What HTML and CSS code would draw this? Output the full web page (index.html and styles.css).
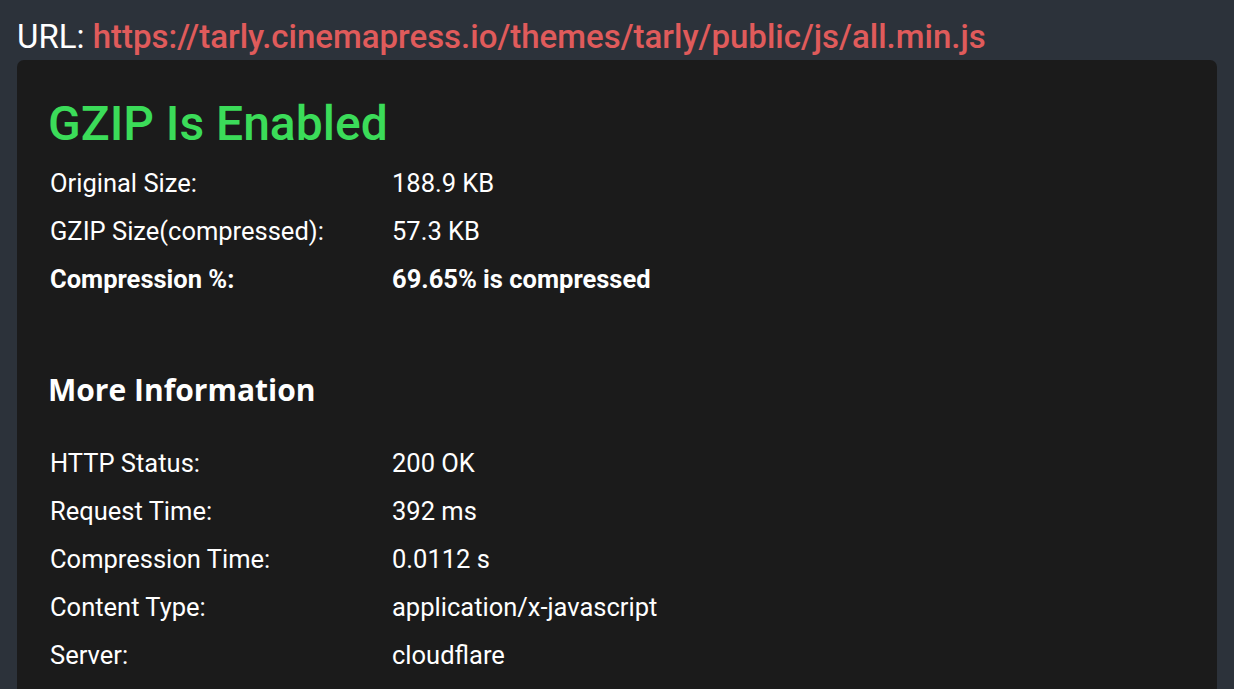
FILE: index.html
```html
<!DOCTYPE html>
<html>
<head>
<meta charset="utf-8">
<link rel="stylesheet" href="styles.css">
</head>
<body>
<div class="page">
  <div class="url-line"><span class="url-label">URL:</span> <span class="url-value">https://tarly.cinemapress.io/themes/tarly/public/js/all.min.js</span></div>
  <div class="card">
    <h1 class="status">GZIP Is Enabled</h1>
    <table class="info first">
      <tr><td class="k">Original Size:</td><td>188.9 KB</td></tr>
      <tr><td class="k">GZIP Size(compressed):</td><td>57.3 KB</td></tr>
      <tr class="strong"><td class="k">Compression %:</td><td>69.65% is compressed</td></tr>
    </table>
    <h2 class="more">More Information</h2>
    <table class="info">
      <tr><td class="k">HTTP Status:</td><td>200 OK</td></tr>
      <tr><td class="k">Request Time:</td><td>392 ms</td></tr>
      <tr><td class="k">Compression Time:</td><td>0.0112 s</td></tr>
      <tr><td class="k">Content Type:</td><td>application/x-javascript</td></tr>
      <tr><td class="k">Server:</td><td>cloudflare</td></tr>
    </table>
  </div>
</div>
</body>
</html>
```
FILE: styles.css
```css
html, body { margin: 0; padding: 0; }
body {
  background: #2c323a;
  font-family: Roboto, "Liberation Sans", sans-serif;
  color: #fff;
  overflow: hidden;
}
.page { padding: 14px 17px 0 17px; }
.url-line {
  font-size: 33px;
  line-height: 46px;
  height: 46px;
  white-space: nowrap;
}
.url-label { color: #fff; }
.url-value { color: #e05b5b; font-weight: 500; }
.card {
  background: #1b1b1b;
  border-radius: 7px;
  padding: 36px 31px 40px 31px;
  min-height: 700px;
}
.status {
  margin: 0;
  color: #3bdc59;
  font-family: Roboto, sans-serif;
  font-weight: 500;
  font-size: 48px;
  line-height: 56px;
}
.info { border-collapse: collapse; }
.info.first { margin-top: 7px; }
.info td {
  font-size: 25.5px;
  line-height: 48px;
  padding: 0 2px;
  height: 48px;
  white-space: nowrap;
}
.info td.k { width: 338px; }
.info tr.strong td { font-weight: 700; }
.more {
  margin: 63px 0 25px 0;
  font-family: "Open Sans", sans-serif;
  font-weight: 700;
  font-size: 30px;
  line-height: 48px;
}
```
